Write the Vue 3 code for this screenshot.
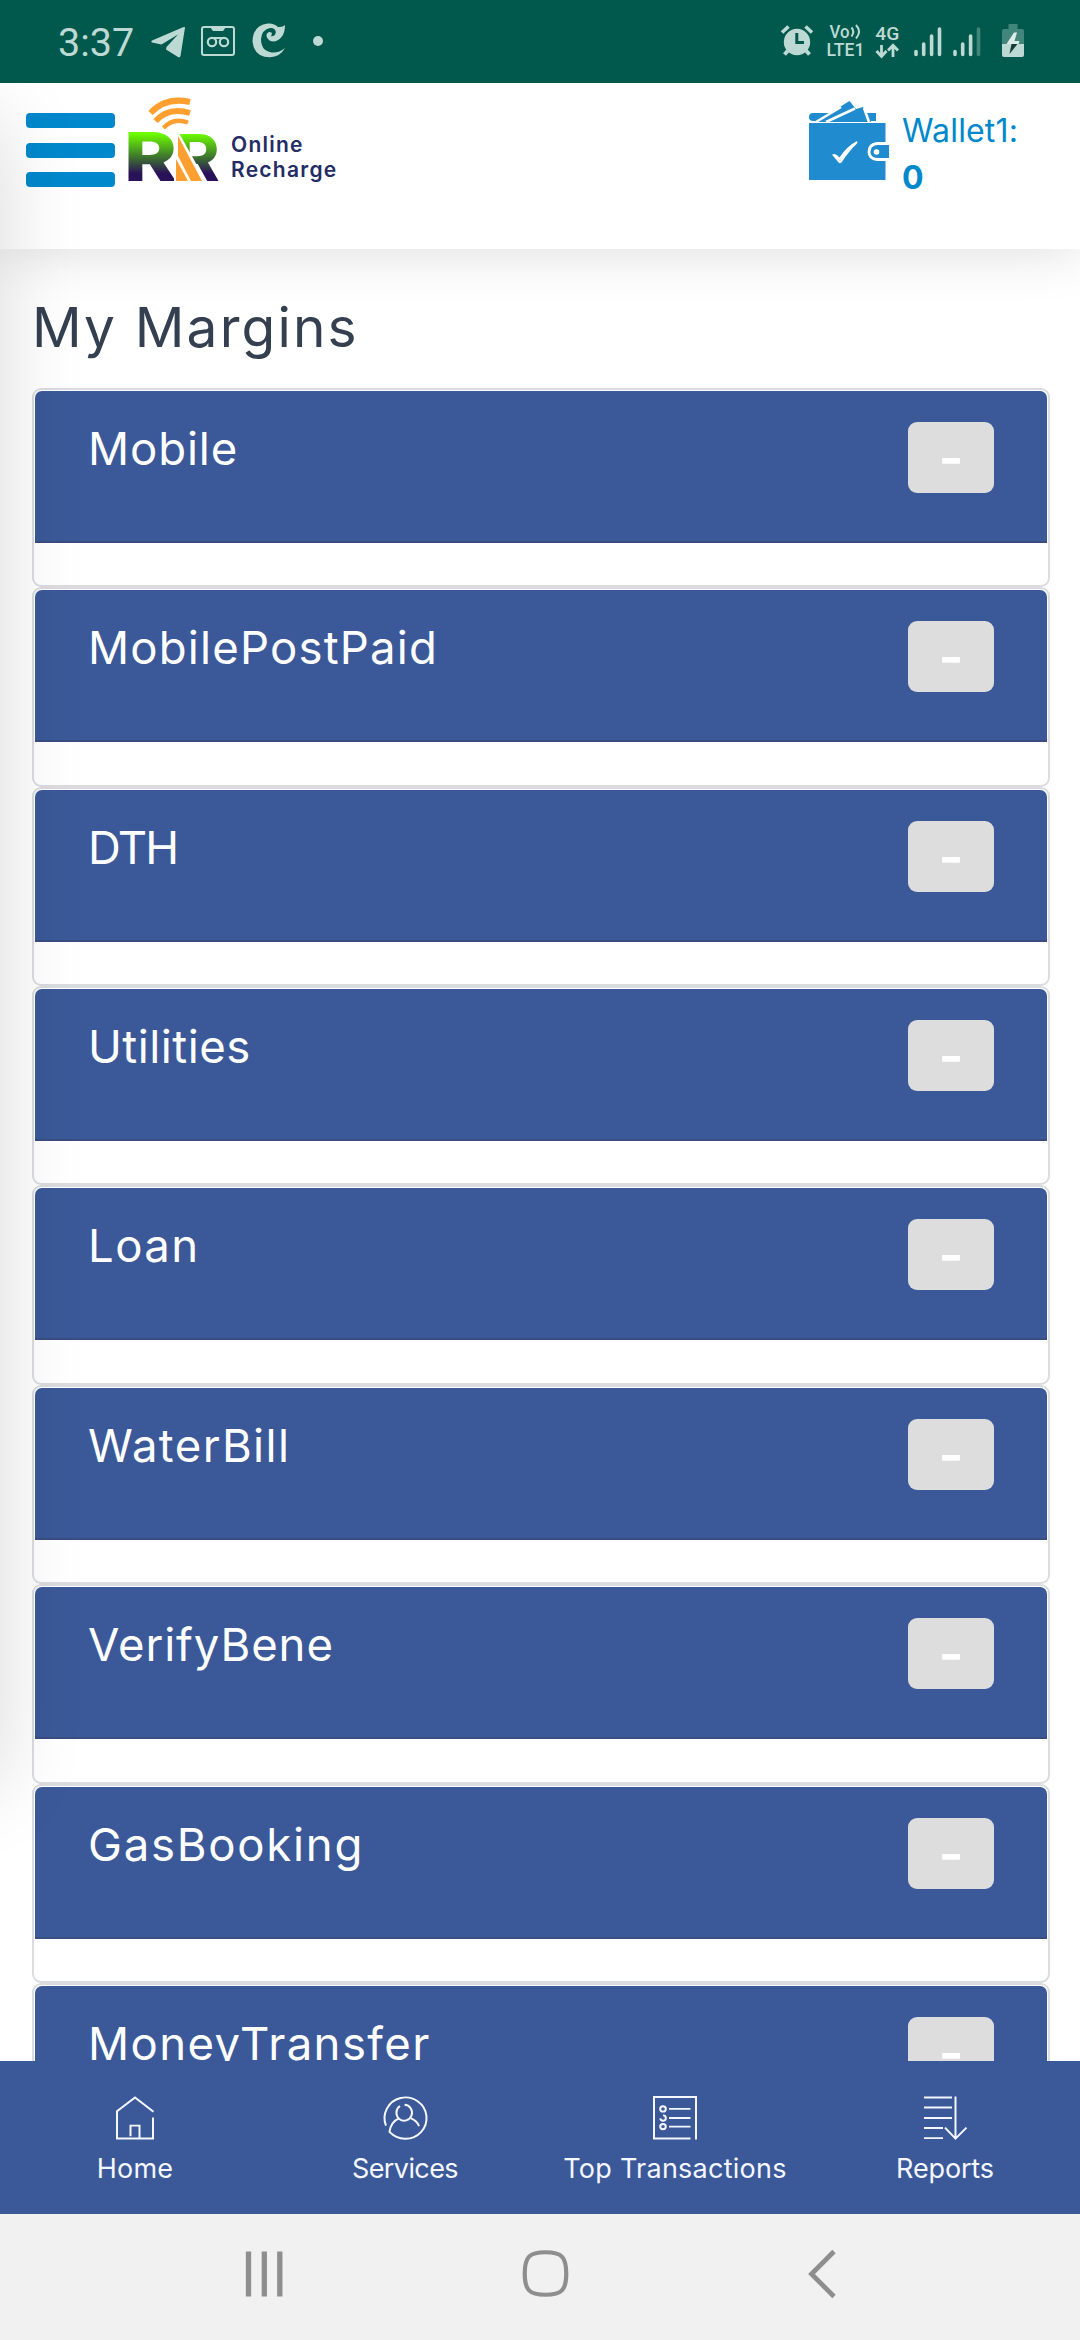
<script setup>
import {ref} from 'vue';

const wallet = ref(0)

const margins = ref([
  { name: 'Mobile', open: true },
  { name: 'MobilePostPaid', open: true },
  { name: 'DTH', open: true },
  { name: 'Utilities', open: true },
  { name: 'Loan', open: true },
  { name: 'WaterBill', open: true },
  { name: 'VerifyBene', open: true },
  { name: 'GasBooking', open: true },
  { name: 'MoneyTransfer', open: true },
])

function toggle(item){
    item.open = !item.open;
}
</script>

<template>
    <div class="screen">
        <div class="status">
            <span class="clock">3:37</span>
            <svg class="telegram" width="35" height="31" viewBox="0 0 35 31">
                <path d="M34 0.5 L29.5 29 Q29 31 27 30 L15 22.5 L15.500 20 L27 7.500 L10.500 17.500 L1 15.500 Q-0.500 14.500 1 13.500 L32 0.300 Q34 -0.500 34 0.500 Z" fill="currentColor"/>
            </svg>
            <svg class="tape" width="34" height="30" viewBox="0 0 34 30" fill="none" stroke="currentColor">
                <rect x="1" y="1" width="32" height="28" rx="2" stroke-width="2"/>
                <path d="M9 1 H25 L22 5 H12 Z" fill="currentColor" stroke="none"/>
                <circle cx="11" cy="16" r="4.200" stroke-width="2.200"/>
                <circle cx="23" cy="16" r="4.200" stroke-width="2.200"/>
                <path d="M11 12 H23" stroke-width="2"/>
            </svg>
            <svg class="swirl" width="34" height="35" viewBox="0 0 34 35">
                <path d="M33 2 Q33 10 29.500 14 Q24 20.500 17.500 17.500 Q13.500 15 14.800 10.800 Q16.500 8 19.500 9.500 Q20.500 11 18.800 13.200 Q23.500 13.500 23.800 9 Q23 4.500 18 5 Q10 6.500 9 16 Q9 28 20 29.500 Q27 30 33 25 Q28 34 18 34.300 Q2 34 0.500 18.500 Q1 2 16 0.500 Q22 0 26 4 Q31 4.500 33 2 Z" fill="currentColor"/>
            </svg>
            <span class="dot"></span>
            <div class="status-right">
                <svg width="32" height="31" viewBox="0 0 32 31">
                    <circle cx="16" cy="17" r="13.200" fill="currentColor"/>
                    <path d="M1 7.500 L7.500 1.500 M24.500 1.500 L31 7.500" stroke="currentColor" stroke-width="3.600" fill="none"/>
                    <path d="M7.500 25 L3.500 29.500 M24.500 25 L28.500 29.500" stroke="currentColor" stroke-width="4" fill="none"/>
                    <path d="M15.800 8 V17.500 H23" stroke="#00594c" stroke-width="3" fill="none"/>
                </svg>
                <svg class="volte" width="40" height="40" viewBox="0 -3 40 40">
                    <text class="net" x="3.500" y="13.500" font-size="17.500" textLength="20" lengthAdjust="spacingAndGlyphs">Vo</text>
                    <path d="M25.500 3.500 Q29 7.500 25.500 12.500 M30 1 Q36 7.500 30 14.500" stroke="currentColor" stroke-width="2" fill="none"/>
                    <text class="net" x="0.500" y="31.500" font-size="17.500" textLength="38" lengthAdjust="spacingAndGlyphs">LTE1</text>
                </svg>
                <svg class="fourg" width="25" height="40" viewBox="0 -3 25 40">
                    <text class="net" x="0.300" y="14.500" font-size="19" textLength="24" lengthAdjust="spacingAndGlyphs">4G</text>
                    <path d="M6.500 20 V31 M1.500 26 L6.500 31.500 L11.500 26 M18 32 V21 M13 25.500 L18 20.200 L23 25.500" stroke="currentColor" stroke-width="2.800" fill="none"/>
                </svg>
                <svg class="signal" width="28" height="30" viewBox="0 0 28 30" stroke="currentColor" stroke-width="3.600" stroke-linecap="round">
                    <path d="M2 24.500 V27.500 M9.700 17 V27.500 M17.600 9 V27.500 M25.500 2 V27.500"/>
                </svg>
                <svg class="signal2" width="28" height="30" viewBox="0 0 28 30" stroke="currentColor" stroke-width="3.600" stroke-linecap="round">
                    <path d="M2 24.500 V27.500 M9.700 17 V27.500 M17.600 9 V27.500"/>
                    <path d="M25.500 2 V27.500" opacity="0.350"/>
                </svg>
                <svg class="battery" width="22" height="33" viewBox="0 0 22 33">
                    <path d="M6.500 0 H15.500 V5 H20 Q22 5 22 7 V20 H0 V7 Q0 5 2 5 H6.500 Z" fill="currentColor" opacity="0.350"/>
                    <path d="M0 20 H22 V31 Q22 33 20 33 H2 Q0 33 0 31 Z" fill="currentColor"/>
                    <path d="M12 8.500 L4.500 20 H16.500 L17.500 17 H12.500 L15 8.500 Z" fill="#dcebe8"/>
                    <path d="M9.500 20 H15.500 L7.500 30 Z" fill="#143b35"/>
                </svg>
            </div>
        </div>

        <header class="topbar">
            <button class="burger">
                <span></span>
                <span></span>
                <span></span>
            </button>
            <svg class="logo" width="98" height="104" viewBox="-5 0 98 104">
                <defs>
                    <linearGradient id="mark" gradientUnits="userSpaceOnUse" x1="0" y1="34" x2="0" y2="84">
                        <stop offset="0.050" stop-color="#6dff00"/>
                        <stop offset="0.500" stop-color="#3f7a2c"/>
                        <stop offset="0.850" stop-color="#2a1259"/>
                    </linearGradient>
                </defs>
                <g fill="none" stroke="#ff9f2f" stroke-width="6">
                    <path d="M22.500 16 Q38 -0.500 62 5"/>
                    <path d="M27.500 24 Q41 9.500 62 16"/>
                    <path d="M35.500 31 Q45 20 60 25.500" stroke-width="4.500"/>
                </g>
                <text class="mark" x="-4" y="84" font-size="68" font-weight="800" textLength="53" lengthAdjust="spacingAndGlyphs">R</text>
                <text class="mark" x="47" y="84" font-size="65" font-weight="700" textLength="45" lengthAdjust="spacingAndGlyphs">R</text>
                <path d="M46 34 L51 36 L79 86 H46 Z" fill="#fff"/>
                <path d="M50 39 L74 84 H63 L50 59 Z M48 62 L60 84 H48 Z" fill="#ff9f2f"/>
            </svg>
            <div class="brand">Online<br>Recharge</div>
            <div class="wallet">
                <svg width="80" height="80" viewBox="0 0 80 80">
                    <path d="M4 12 H67 V20 H4 Q0 20 0 16 Q0 12 4 12 Z" fill="#208ccf"/>
                    <path d="M6 21 L40.500 0 L47 8 L54 6 L62 21 Z" fill="#208ccf"/>
                    <path d="M44.500 8.500 L47 6 L54.500 6.500 V0 H41 Z" fill="#fff" opacity="0"/>
                    <path d="M7 21 L32 6 M17 21 L46 7.500 M55 7 L60 21" stroke="#fff" stroke-width="2.500" fill="none"/>
                    <path d="M0 22 H76.500 V79 H0 Z" fill="#208ccf"/>
                    <path d="M80 42.500 H68 Q60 43.500 60 51 Q60 57.500 68 58.500 H80" fill="#208ccf" stroke="#fff" stroke-width="2.800"/>
                    <circle cx="67.500" cy="51" r="2.800" fill="#fff"/>
                    <path d="M23 53.500 Q27 51.500 30.500 56.500 Q38 45 48 40 Q49 41 48 42.500 Q40 50 32.500 61.500 Q31 63 29.500 61.500 Z" fill="#fff"/>
                </svg>
                <div class="wallet-text">
                    <div class="wallet-name">Wallet1:</div>
                    <b>{{ wallet }}</b>
                </div>
            </div>
        </header>

        <main class="content">
            <h1>My Margins</h1>
            <div class="panel" v-for="item in margins" :key="item.name">
                <div class="panel-head">
                    <span :class="['panel-name', item.name.toLowerCase()]">{{ item.name }}</span>
                    <button class="toggle" @click="toggle(item)">{{ item.open ? '-' : '+' }}</button>
                </div>
            </div>
        </main>

        <!-- closed side menu, only its shadow is visible -->
        <aside class="sidebar"></aside>

        <nav class="tabs">
            <a class="tab home">
                <svg width="44" height="44" viewBox="0 0 44 46" preserveAspectRatio="none">
                    <path d="M40.500 16.500 L22 1.500 L4 16 V44.500 H40 V22.500 M17.500 42 V31 H26.500 V44"/>
                </svg>
                <span>Home</span>
            </a>
            <a class="tab services">
                <svg width="44" height="44" viewBox="0 0 44 46" preserveAspectRatio="none">
                    <path d="M3 31 A21 21.600 0 1 1 22 44.700 Q13 44.500 6.500 37.500 Q8 27 16 23.500"/>
                    <path d="M17 10.500 A7.800 8.300 0 1 0 21.500 9.200 M28 23.500 Q34 26 36 31.500"/>
                </svg>
                <span>Services</span>
            </a>
            <a class="tab top">
                <svg width="44" height="44" viewBox="0 0 44 46" preserveAspectRatio="none">
                    <path d="M37.500 44.500 H1 V1 H43 V45.500 M16 13.500 H37.500 M16 23 H37.500 M16 32 H37.500"/>
                    <circle cx="10" cy="13.500" r="2.800"/>
                    <path d="M10 20.300 A2.800 2.800 0 1 1 7.300 23.500"/>
                    <circle cx="10" cy="32" r="2.800"/>
                </svg>
                <span>Top Transactions</span>
            </a>
            <a class="tab reports">
                <svg width="44" height="44" viewBox="0 0 44 46" preserveAspectRatio="none">
                    <path d="M1 1.500 H29 M1 12 H29 M1 23 H29 M1 33.500 H20 M1 44 H20 M32.500 0.500 V44 M22 33 L32.500 44.500 L43.500 33"/>
                </svg>
                <span>Reports</span>
            </a>
        </nav>

        <div class="system">
            <svg width="38" height="47" viewBox="0 0 38 47"><path d="M3.500 1.500 V46.500 M19.300 1.500 V46.500 M34.800 1.500 V46.500" stroke-width="5.300"/></svg>
            <svg width="47" height="47" viewBox="0 0 47 48"><path d="M23.500 2.300 C40 2.300 44.700 7 44.700 24 C44.700 41 40 45.700 23.500 45.700 C7 45.700 2.300 41 2.300 24 C2.300 7 7 2.300 23.500 2.300 Z" stroke-width="4.300"/></svg>
            <svg width="28" height="48" viewBox="0 0 28 48"><path d="M26 1.500 L3.500 24 L26 46.500" stroke-width="4.800"/></svg>
        </div>
    </div>
</template>

<style>
body{
    background: #fff;
    overflow: hidden;
}
</style>

<style scoped>
.screen{
    width: 1080px;
    height: 2340px;
    position: relative;
    display: flex;
    flex-direction: column;
    overflow: hidden;
    background: #fff;
    font-family: Inter, "Noto Sans", sans-serif;
}

button{
    border: 0;
    padding: 0;
    font-family: inherit;
}

svg{
    display: block;
    flex: none;
    overflow: visible;
}

.status{
    height: 83px;
    flex: none;
    box-sizing: border-box;
    padding: 0 56px 2px 58px;
    display: flex;
    align-items: center;
    background: #00594c;
    color: #bdd9d3;
    position: relative;
    z-index: 3;
    font-family: Roboto, sans-serif;
}

.clock{
    width: 93px;
    padding-top: 3px;
    box-sizing: border-box;
    font-size: 39.500px;
}

.telegram{
    margin-top: 3px;
}

.tape{
    margin-left: 15px;
}

.swirl{
    margin-left: 17px;
}

.dot{
    width: 10px;
    height: 10px;
    margin-left: 27px;
    border-radius: 50%;
    background: currentColor;
}

.status-right{
    margin-left: auto;
    display: flex;
    align-items: center;
}

.net{
    fill: currentColor;
    font-weight: 500;
}

.volte{
    margin-left: 13px;
    margin-top: 1px;
}

.fourg{
    margin-left: 9px;
    margin-top: 3px;
}

.signal{
    margin-left: 14px;
    margin-top: 2px;
}

.signal2{
    margin-left: 11px;
    margin-top: 2px;
}

.battery{
    margin-left: 21px;
}

.topbar{
    height: 166px;
    flex: none;
    box-sizing: border-box;
    padding: 0 62px 0 26px;
    display: flex;
    align-items: flex-start;
    background: #fff;
    box-shadow: 0 0 56px rgba(0,0,0,0.150);
    position: relative;
    z-index: 1;
}

.burger{
    width: 89px;
    margin-top: 30px;
    display: flex;
    flex-direction: column;
    gap: 14.500px;
    background: none;
}

.burger span{
    height: 15px;
    border-radius: 4px;
    background: #0088cc;
}

.logo{
    margin: 14px 0 0 8px;
}

.mark{
    fill: url(#mark);
}

.brand{
    margin: 50px 0 0 10px;
    color: #232c63;
    font-size: 21px;
    font-weight: 600;
    line-height: 24.500px;
    letter-spacing: 1.250px;
}

.wallet{
    margin-left: auto;
    display: flex;
    align-items: flex-start;
    gap: 13px;
    color: #0088cc;
}

.wallet > svg{
    margin-top: 18px;
}

.wallet-text{
    margin-top: 24px;
    font-size: 32px;
    line-height: 47px;
}

.wallet-name{
    letter-spacing: 0.150px;
}

.content{
    flex: 1;
    min-height: 0;
    overflow: hidden;
    padding: 0 30px 0 32px;
}

h1{
    margin: 0;
    height: 139px;
    box-sizing: border-box;
    padding-top: 38px;
    color: #343f4f;
    font-size: 55px;
    font-weight: 400;
    line-height: 80px;
    letter-spacing: 2.150px;
}

.panel{
    height: 199.370px;
    box-sizing: border-box;
    padding: 1px;
    border: 2px solid #dadcdf;
    border-radius: 9px;
}

.panel-head{
    height: 152px;
    box-sizing: border-box;
    padding: 31px 53px 0 53px;
    display: flex;
    align-items: flex-start;
    justify-content: space-between;
    background: #3b5998;
    border-bottom: 2px solid #3b4c80;
    border-radius: 7px 7px 0 0;
}

.panel-name{
    color: #fff;
    font-size: 45.500px;
    line-height: 54px;
    letter-spacing: 0.900px;
}

.mobilepostpaid{
    letter-spacing: 1.200px;
}

.dth{
    letter-spacing: -1.800px;
}

.utilities{
    letter-spacing: 0.500px;
}

.loan, .waterbill, .moneytransfer{
    letter-spacing: 1.400px;
}

.gasbooking{
    letter-spacing: 1.750px;
}

.toggle{
    width: 86px;
    height: 71px;
    border-radius: 9px;
    background: #ddd;
    color: #fff;
    font-size: 54px;
    font-weight: 600;
    line-height: 67px;
}

.sidebar{
    position: absolute;
    left: -300px;
    top: 120px;
    width: 300px;
    height: 1665px;
    z-index: 2;
    box-shadow: 0 0 79px rgba(0,0,0,0.150);
}

.tabs{
    height: 153px;
    flex: none;
    display: grid;
    grid-template-columns: repeat(4, 1fr);
    background: #3b5998;
    position: relative;
    z-index: 3;
}

.tab{
    padding-top: 35px;
    display: flex;
    flex-direction: column;
    align-items: center;
    color: #f4f7ff;
    font-size: 27px;
    line-height: 34px;
}

.tab svg{
    margin-bottom: 12px;
    fill: none;
    stroke: currentColor;
    stroke-width: 2;
}

.home, .top{
    letter-spacing: 0.250px;
}

.services{
    letter-spacing: -0.600px;
}

.reports{
    letter-spacing: -0.150px;
}

.system{
    height: 126px;
    flex: none;
    box-sizing: border-box;
    padding: 36px 0 0 245px;
    display: flex;
    gap: 239px;
    background: #f1f1f1;
    position: relative;
    z-index: 3;
}

.system path{
    fill: none;
    stroke: #8e8e8e;
}
</style>
